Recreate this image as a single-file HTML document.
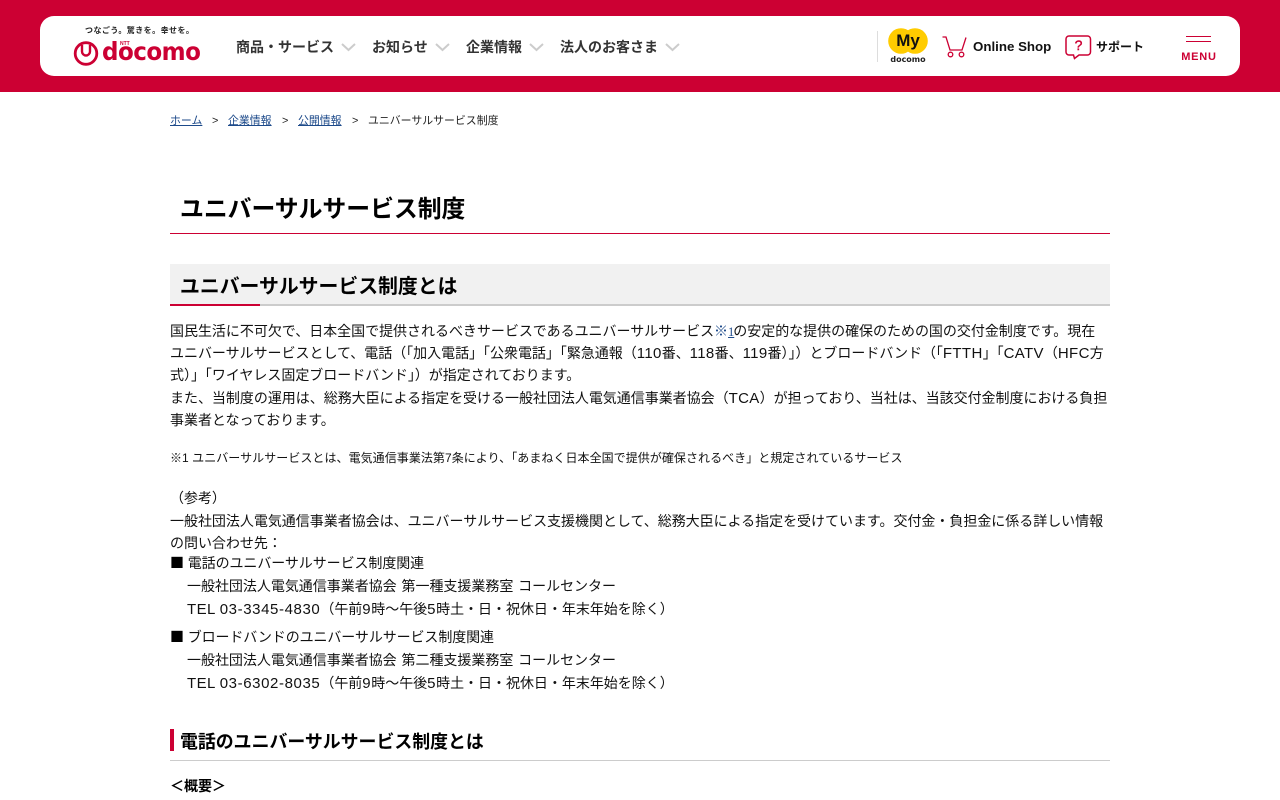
<!DOCTYPE html>
<html lang="ja"><head><meta charset="utf-8"><title>ユニバーサルサービス制度</title>
<style>
html,body{margin:0;padding:0;background:#fff;width:1280px;height:800px;overflow:hidden}
body{position:relative;font-family:"Liberation Sans","Noto Sans CJK JP",sans-serif;color:#111;font-size:14px}
.t{position:absolute;white-space:nowrap;line-height:22px;letter-spacing:-.025px}
.l{font-size:15px;letter-spacing:.35px;line-height:22px}
.e{font-size:15px;letter-spacing:.6px;line-height:22px}
.s{font-family:"Noto Sans CJK JP",sans-serif;color:#000}
.w{word-spacing:1px}
.n{position:absolute;top:37px;font-size:14px;font-weight:700;color:#333;line-height:20px;white-space:nowrap}
.h{position:absolute;background:#cc0033}
.b a{color:#1d4a8a;text-decoration:underline}
.b{position:absolute;top:113px;font-size:10.9px;line-height:16px;white-space:nowrap;color:#222}
.m{color:#1d4a8a;font-family:"Liberation Serif","Noto Sans CJK JP",serif}
svg{position:absolute;overflow:visible}
</style></head><body>
<div class="h" style="left:0;top:0;width:1280px;height:92px"></div>
<div style="position:absolute;left:40px;top:16px;width:1200px;height:60px;background:#fff;border-radius:14px"></div>

<div style="position:absolute;left:85px;top:26px;font-size:8px;font-weight:700;line-height:10px;letter-spacing:.45px;white-space:nowrap;color:#222">つなごう。驚きを。幸せを。</div>
<svg style="left:73px;top:41px" width="26" height="25" viewBox="0 0 26 25"><circle cx="13" cy="12.5" r="10.8" fill="none" stroke="#cc0033" stroke-width="2.800"/><path d="M9 4v6.500a4 4 0 0 0 8 0V4" fill="none" stroke="#cc0033" stroke-width="2.400"/></svg>
<div style="position:absolute;left:102px;top:37px;font:700 25px/30px 'DejaVu Sans',sans-serif;color:#cc0033;letter-spacing:-.55px;white-space:nowrap;transform:scaleX(.92);transform-origin:0 0">docomo</div>
<div style="position:absolute;left:120px;top:41px;font:700 5px/6px 'Liberation Sans',sans-serif;color:#cc0033;white-space:nowrap">NTT</div>

<div class="n" style="left:236px">商品・サービス</div>
<svg style="left:341px;top:43px" width="15" height="9"><path d="M1 1l6.500 6L14 1" fill="none" stroke="#ccc" stroke-width="2"/></svg>
<div class="n" style="left:372px">お知らせ</div>
<svg style="left:435px;top:43px" width="15" height="9"><path d="M1 1l6.500 6L14 1" fill="none" stroke="#ccc" stroke-width="2"/></svg>
<div class="n" style="left:466px">企業情報</div>
<svg style="left:529px;top:43px" width="15" height="9"><path d="M1 1l6.500 6L14 1" fill="none" stroke="#ccc" stroke-width="2"/></svg>
<div class="n" style="left:560px">法人のお客さま</div>
<svg style="left:665px;top:43px" width="15" height="9"><path d="M1 1l6.500 6L14 1" fill="none" stroke="#ccc" stroke-width="2"/></svg>

<div style="position:absolute;left:877px;top:31px;width:1px;height:31px;background:#ddd"></div>
<svg style="left:888px;top:28px" width="40" height="26"><circle cx="13" cy="13" r="12.800" fill="#ffcc00"/><circle cx="27" cy="13" r="12.800" fill="#ffcc00"/></svg>
<div style="position:absolute;left:888px;top:30px;width:40px;text-align:center;font-size:17px;font-weight:700;line-height:21px;color:#111">My</div>
<div style="position:absolute;left:888px;top:54px;width:40px;text-align:center;font:700 8px/11px 'DejaVu Sans',sans-serif;color:#222">docomo</div>

<svg style="left:942px;top:36px" width="25" height="22" viewBox="0 0 25 22"><path d="M0.500 1H4L8 14H20L24 1.500" fill="none" stroke="#cc0033" stroke-width="1.300"/><circle cx="8.500" cy="18.500" r="2.300" fill="none" stroke="#cc0033" stroke-width="1.300"/><circle cx="19.500" cy="18.500" r="2.300" fill="none" stroke="#cc0033" stroke-width="1.300"/></svg>
<div style="position:absolute;left:973px;top:38px;font-size:13.300px;font-weight:700;line-height:18px;color:#111;white-space:nowrap">Online Shop</div>

<svg style="left:1065px;top:35px" width="27" height="25" viewBox="0 0 27 25"><path d="M4 1H22.500A3 3 0 0 1 25.500 4V17A3 3 0 0 1 22.500 20H14L9.500 23.500L8.500 20H4A3 3 0 0 1 1 17V4A3 3 0 0 1 4 1Z" fill="none" stroke="#cc0033" stroke-width="1.500"/></svg>
<div style="position:absolute;left:1065px;top:36px;width:27px;text-align:center;font-size:14px;font-weight:400;line-height:19px;color:#cc0033;-webkit-text-stroke:.4px #cc0033">?</div>
<div style="position:absolute;left:1096px;top:38px;font-size:12px;font-weight:700;line-height:18px;color:#111;white-space:nowrap">サポート</div>

<div class="h" style="left:1186px;top:36px;width:25px;height:1px"></div>
<div class="h" style="left:1186px;top:41px;width:25px;height:1px"></div>
<div style="position:absolute;left:1172px;top:50px;width:54px;text-align:center;font-size:11px;font-weight:700;line-height:14px;letter-spacing:.8px;color:#cc0033">MENU</div>

<div class="b" style="left:170px"><a>ホーム</a></div>
<div class="b" style="left:212px">&gt;</div>
<div class="b" style="left:228px"><a>企業情報</a></div>
<div class="b" style="left:282px">&gt;</div>
<div class="b" style="left:298px"><a>公開情報</a></div>
<div class="b" style="left:352px">&gt;</div>
<div class="b" style="left:368px">ユニバーサルサービス制度</div>

<div class="t" style="left:180px;top:193.500px;font-size:23.850px;line-height:32px;font-weight:700;color:#000">ユニバーサルサービス制度</div>
<div class="h" style="left:170px;top:233px;width:940px;height:1px"></div>

<div style="position:absolute;left:170px;top:264px;width:940px;height:40px;background:#f1f1f1"></div>
<div style="position:absolute;left:170px;top:304px;width:940px;height:2px;background:#ccc"></div>
<div class="h" style="left:170px;top:304px;width:90px;height:2px"></div>
<div class="t" style="left:180px;top:273px;font-size:19.850px;line-height:28px;font-weight:700;color:#000;letter-spacing:0">ユニバーサルサービス制度とは</div>

<div class="t" style="left:170px;top:320px">国民生活に不可欠で、日本全国で提供されるべきサービスであるユニバーサルサービス<span class="m">※<u style="font-size:12.500px;margin-right:-1px">1</u></span>の安定的な提供の確保のための国の交付金制度です。現在</div>
<div class="t" style="left:170px;top:342px">ユニバーサルサービスとして、電話（「加入電話」「公衆電話」「緊急通報（<span class="l">110</span>番、<span class="l">118</span>番、<span class="l">119</span>番）」）とブロードバンド（「<span class="l">FTTH</span>」「<span class="l">CATV</span>（<span class="l">HFC</span>方</div>
<div class="t" style="left:170px;top:364px">式）」「ワイヤレス固定ブロードバンド」）が指定されております。</div>
<div class="t" style="left:170px;top:387px">また、当制度の運用は、総務大臣による指定を受ける一般社団法人電気通信事業者協会（<span class="l">TCA</span>）が担っており、当社は、当該交付金制度における負担</div>
<div class="t" style="left:170px;top:409px">事業者となっております。</div>

<div class="t" style="left:170px;top:447px;font-size:12px;letter-spacing:.05px">※1 ユニバーサルサービスとは、電気通信事業法第7条により、「あまねく日本全国で提供が確保されるべき」と規定されているサービス</div>

<div class="t" style="left:170px;top:487px">（参考）</div>
<div class="t" style="left:170px;top:510px">一般社団法人電気通信事業者協会は、ユニバーサルサービス支援機関として、総務大臣による指定を受けています。交付金・負担金に係る詳しい情報</div>
<div class="t" style="left:170px;top:532px">の問い合わせ先：</div>
<div class="t" style="left:170px;top:552px;letter-spacing:-.08px"><span class="s">■</span> 電話のユニバーサルサービス制度関連</div>
<div class="t w" style="left:187px;top:575px">一般社団法人電気通信事業者協会 第一種支援業務室 コールセンター</div>
<div class="t" style="left:187px;top:598px"><span class="e" style="letter-spacing:.4px">TEL </span><span class="e">03-3345-4830</span>（午前<span class="e">9</span>時～午後<span class="e">5</span>時土・日・祝休日・年末年始を除く）</div>
<div class="t" style="left:170px;top:626px;letter-spacing:-.1px"><span class="s">■</span> ブロードバンドのユニバーサルサービス制度関連</div>
<div class="t w" style="left:187px;top:649px">一般社団法人電気通信事業者協会 第二種支援業務室 コールセンター</div>
<div class="t" style="left:187px;top:672px"><span class="e" style="letter-spacing:.4px">TEL </span><span class="e">03-6302-8035</span>（午前<span class="e">9</span>時～午後<span class="e">5</span>時土・日・祝休日・年末年始を除く）</div>

<div class="h" style="left:170px;top:729px;width:4px;height:22px"></div>
<div class="t" style="left:180px;top:730px;font-size:17.900px;line-height:24px;font-weight:700;color:#000;letter-spacing:0">電話のユニバーサルサービス制度とは</div>
<div style="position:absolute;left:170px;top:760px;width:940px;height:1px;background:#ccc"></div>
<div class="t" style="left:170px;top:775px;font-weight:700;color:#000">＜概要＞</div>
</body></html>
